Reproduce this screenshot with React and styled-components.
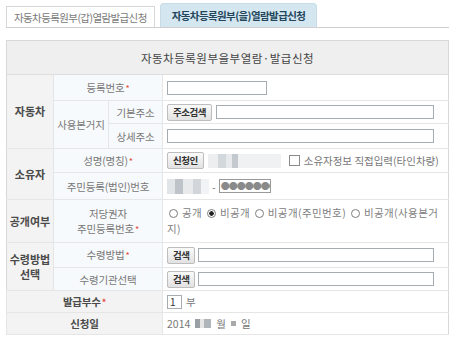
import React from 'react';
import styled, { createGlobalStyle } from 'styled-components';

const GlobalStyle = createGlobalStyle`
  html, body {
    margin: 0;
    padding: 0;
    background: #ffffff;
  }
  body {
    font-family: 'Noto Sans CJK KR', 'Noto Sans', sans-serif;
    font-size: 11px;
    color: #666666;
  }
`;

const Page = styled.div`
  width: 460px;
  height: 347px;
  padding: 3px 0 0 6px;
  box-sizing: border-box;
`;

const Tabs = styled.div`
  display: flex;
  align-items: flex-end;
  gap: 5px;
  width: 443px;
  border-bottom: 1px solid #cfcfcf;
`;

const Tab = styled.div`
  height: ${p => (p.active ? 24 : 21)}px;
  padding: 0 ${p => (p.active ? 11 : 7)}px;
  display: flex;
  align-items: center;
  box-sizing: border-box;
  font-size: 10.5px;
  letter-spacing: -0.6px;
  white-space: nowrap;
  color: ${p => (p.active ? '#23465c' : '#7a7a7a')};
  font-weight: ${p => (p.active ? 700 : 400)};
  background: ${p => (p.active ? '#d4e6f0' : '#ffffff')};
  border: 1px solid ${p => (p.active ? '#c8dbe6' : '#d6d6d6')};
  border-bottom: none;
  border-radius: ${p => (p.active ? '4px 4px 0 0' : '0')};
`;

const Table = styled.table`
  margin-top: 12px;
  width: 443px;
  border-collapse: collapse;
  table-layout: fixed;
  border: 1px solid #d8d8d8;
`;

const Title = styled.th`
  height: 33px;
  padding: 0;
  background: #efefef;
  color: #444444;
  font-size: 11.5px;
  font-weight: 400;
  letter-spacing: 0.5px;
  border-bottom: 1px solid #dedede;
`;

const Cat = styled.th`
  padding: 0;
  background: #f3f3f3;
  color: #4a4a4a;
  font-weight: 700;
  font-size: 11px;
  line-height: 15px;
  border: 1px solid #e6e6e6;
  border-left: none;
`;

const Label = styled.td`
  height: ${p => p.h || 24}px;
  padding: 0;
  text-align: center;
  background: ${p => (p.gray ? '#f3f3f3' : '#f7fafc')};
  color: ${p => (p.gray ? '#4a4a4a' : '#777777')};
  font-weight: ${p => (p.gray ? 700 : 400)};
  font-size: 10.5px;
  line-height: 15px;
  letter-spacing: -0.2px;
  border: 1px solid #e6e6e6;
`;

const Value = styled.td`
  padding: 0 0 0 4px;
  border-top: 1px solid #e6e6e6;
  border-bottom: 1px solid #e6e6e6;
  color: #777777;
  font-size: 10.5px;
  line-height: 15px;
`;

const Line = styled.div`
  display: flex;
  align-items: center;
  gap: ${p => p.gap || 4}px;
`;

const Req = styled.span`
  color: #e24a3b;
  font-size: 9px;
  margin-left: 1px;
`;

const Field = styled.div`
  height: 14px;
  width: ${p => (p.w ? `${p.w}px` : 'auto')};
  flex: ${p => (p.w ? 'none' : '1')};
  margin-right: ${p => (p.w ? 0 : 14)}px;
  border: 1px solid #a7acb0;
  background: #ffffff;
  box-sizing: border-box;
  font-size: 10px;
  line-height: 12px;
  padding-left: 2px;
  color: #333333;
`;

const Btn = styled.div`
  height: 17px;
  padding: 0 5px;
  display: flex;
  align-items: center;
  box-sizing: border-box;
  border: 1px solid #bdbdbd;
  border-radius: 2px;
  background: linear-gradient(#fafafa, #e2e2e2);
  color: #333333;
  font-weight: 700;
  font-size: 9.5px;
  letter-spacing: -0.5px;
  white-space: nowrap;
`;

const Mosaic = styled.div`
  width: ${p => p.w}px;
  height: ${p => p.h || 14}px;
  background: ${p => p.bg};
`;

const Check = styled.span`
  width: 9px;
  height: 9px;
  border: 1px solid #8a8a8a;
  background: #fff;
  margin-left: 4px;
`;

const Pw = styled.div`
  width: 52px;
  height: 14px;
  border: 1px solid #9a9a9a;
  box-sizing: border-box;
  overflow: hidden;
  white-space: nowrap;
  font-size: 9px;
  line-height: 12px;
  color: #8a8a8a;
  letter-spacing: -1px;
  padding-left: 1px;
`;

const Radios = styled.div`
  line-height: 16px;
  letter-spacing: 0.4px;
  color: #808080;
`;

const Radio = styled.span`
  display: inline-block;
  width: 9px;
  height: 9px;
  border: 1px solid #7d7d7d;
  border-radius: 50%;
  box-sizing: border-box;
  margin: 0 4px 0 2px;
  vertical-align: -1px;
  background: ${p => (p.on ? 'radial-gradient(circle, #222 0 2px, #fff 2.5px)' : '#fff')};
`;

const carMosaic = 'linear-gradient(90deg, #eceef0 0 10px, #d3d8dd 10px 18px, #e7e9ec 18px 24px, #c3c9cf 24px 30px, #f0f1f2 30px)';
const idMosaic = 'linear-gradient(90deg, #e2e5e8 0 8px, #bdc3c9 8px 16px, #e8eaec 16px 26px, #d2d6da 26px 34px, #f2f3f4 34px)';

export default function App() {
  return (
    <Page>
      <GlobalStyle />
      <Tabs>
        <Tab>자동차등록원부(갑)열람발급신청</Tab>
        <Tab active>자동차등록원부(을)열람발급신청</Tab>
      </Tabs>
      <Table>
        <colgroup>
          <col style={{ width: 47 }} />
          <col style={{ width: 55 }} />
          <col style={{ width: 54 }} />
          <col />
        </colgroup>
        <tbody>
          <tr>
            <Title colSpan={4}>자동차등록원부을부열람·발급신청</Title>
          </tr>
          <tr>
            <Cat rowSpan={3}>자동차</Cat>
            <Label colSpan={2} h={25}>등록번호<Req>*</Req></Label>
            <Value><Field w={100} /></Value>
          </tr>
          <tr>
            <Label rowSpan={2}>사용본거지</Label>
            <Label h={22}>기본주소</Label>
            <Value>
              <Line><Btn>주소검색</Btn><Field /></Line>
            </Value>
          </tr>
          <tr>
            <Label h={24}>상세주소</Label>
            <Value><Field /></Value>
          </tr>
          <tr>
            <Cat rowSpan={2}>소유자</Cat>
            <Label colSpan={2} h={23}>성명(명칭)<Req>*</Req></Label>
            <Value>
              <Line>
                <Btn>신청인</Btn>
                <Mosaic w={73} bg={carMosaic} />
                <Check />
                <span>소유자정보 직접입력(타인차량)</span>
              </Line>
            </Value>
          </tr>
          <tr>
            <Label colSpan={2} h={26}>주민등록(법인)번호</Label>
            <Value>
              <Line gap={3}>
                <Mosaic w={42} h={15} bg={idMosaic} />
                <span>-</span>
                <Pw>●●●●●●●</Pw>
              </Line>
            </Value>
          </tr>
          <tr>
            <Cat>공개여부</Cat>
            <Label colSpan={2} h={42}>저당권자<br />주민등록번호<Req>*</Req></Label>
            <Value>
              <Radios>
                <Radio />공개 <Radio on />비공개 <Radio />비공개(주민번호) <Radio />비공개(사용본거지)
              </Radios>
            </Value>
          </tr>
          <tr>
            <Cat rowSpan={2}>수령방법<br />선택</Cat>
            <Label colSpan={2} h={24}>수령방법<Req>*</Req></Label>
            <Value>
              <Line gap={3}><Btn>검색</Btn><Field /></Line>
            </Value>
          </tr>
          <tr>
            <Label colSpan={2} h={22}>수령기관선택</Label>
            <Value>
              <Line gap={3}><Btn>검색</Btn><Field /></Line>
            </Value>
          </tr>
          <tr>
            <Label colSpan={3} gray h={21}>발급부수<Req>*</Req></Label>
            <Value>
              <Line><Field w={15}>1</Field><span>부</span></Line>
            </Value>
          </tr>
          <tr>
            <Label colSpan={3} gray h={21}>신청일</Label>
            <Value>
              <Line gap={5}>
                <span>2014</span>
                <Mosaic w={16} h={9} bg="linear-gradient(90deg, #9aa0a6 0 5px, #e6e6e6 5px 9px, #b0b5ba 9px)" />
                <span>월</span>
                <Mosaic w={5} h={5} bg="#a9a9a9" />
                <span>일</span>
              </Line>
            </Value>
          </tr>
        </tbody>
      </Table>
    </Page>
  );
}
